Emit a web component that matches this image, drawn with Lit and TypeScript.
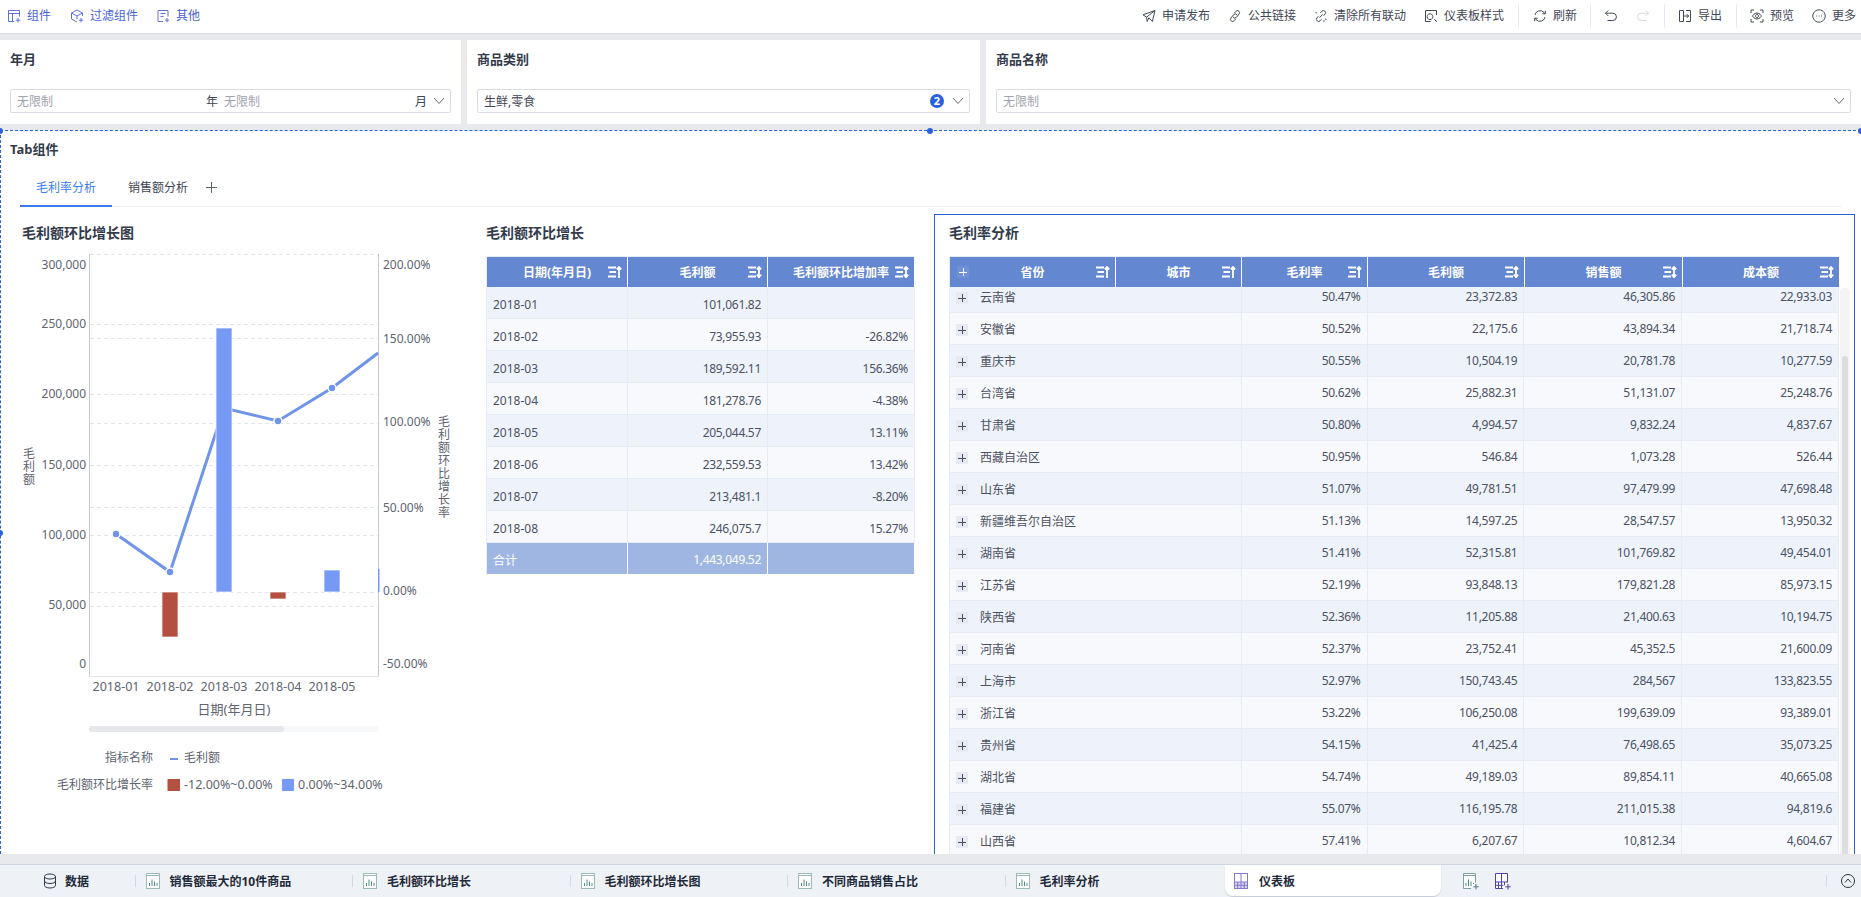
import { LitElement, html, svg, css } from 'lit';
import { customElement } from 'lit/decorators.js';

const toolIcons: Record<string, string> = {
  widget: 'M7 12.5H1.5v-11h11v6M1.5 4.5h11M5.5 4.5v8M11 9v4.5M8.8 11.2h4.4',
  filter: 'M12.5 7V4L7 1 1.5 4v6L7 13M1.5 4L7 7l5.5-3M7 7v3M11 9v4.4M8.8 11.2h4.4',
  other: 'M7 12.5H2v-11h10v6M4.5 4.5h5M4.5 7.5h3M11 9v4.5M8.8 11.2h4.4',
  send: 'M1 5.8L13 1.5l-2.6 11-3.6-3.7M1 5.8l3.6 2.4L13 1.5M4.6 8.2l.6 4.3 1.6-3.7',
  link: 'M6.2 4.2l1.6-1.9a2.1 2.1 0 0 1 3.2 2.8L8.2 8.5a2.1 2.1 0 0 1-3.2-.6M7.8 9.8l-1.6 1.9A2.1 2.1 0 0 1 3 8.9l2.8-3.4a2.1 2.1 0 0 1 3.2.6',
  unlink: 'M6.4 3.8l1.4-1.5a2.1 2.1 0 0 1 3.2 2.8L9.6 6.8M7.6 10.2l-1.4 1.5A2.1 2.1 0 0 1 3 8.9l1.4-1.7M5.6 8.6l3-3.2M1.5 3.5l1.6.7M12.5 10.5l-1.6-.7M10 12.8v-1.6',
  style: 'M12.5 6V1.5h-11v11h5M10.4 10.2l2.4 2.8M6 4.8a2.9 2.9 0 1 0 .01 0',
  refresh: 'M2 6a5.2 5.2 0 0 1 9-2.6l1 1.3M12.3 1.8v3h-3M12 8a5.2 5.2 0 0 1-9 2.6l-1-1.3M1.7 12.2v-3h3',
  undo: 'M4.2 1.5L1.5 4.2l2.7 2.7M1.5 4.2h7.3a3.6 3.6 0 0 1 0 7.3H3.5',
  redo: 'M9.8 1.5l2.7 2.7-2.7 2.7M12.5 4.2H5.2a3.6 3.6 0 0 0 0 7.3h5.3',
  exportIt: 'M5.5 1.5h-4v11h4zM8 1.5h4.5v11H8M5.5 7h5M8.7 5l2 2-2 2',
  preview: 'M1 4V1h3M10 1h3v3M13 10v3h-3M4 13H1v-3M2.5 7S4.2 4 7 4s4.5 3 4.5 3-1.7 3-4.5 3-4.5-3-4.5-3zM7 5.5a1.5 1.5 0 1 0 .01 0',
  more: 'M7 .8a6.2 6.2 0 1 0 .01 0M4.3 7h.8M6.7 7h.8M9.1 7h.8',
};

const middleRows = [
  ['2018-01', '101,061.82', ''],
  ['2018-02', '73,955.93', '-26.82%'],
  ['2018-03', '189,592.11', '156.36%'],
  ['2018-04', '181,278.76', '-4.38%'],
  ['2018-05', '205,044.57', '13.11%'],
  ['2018-06', '232,559.53', '13.42%'],
  ['2018-07', '213,481.1', '-8.20%'],
  ['2018-08', '246,075.7', '15.27%'],
];

const provinceRows = [
  ['云南省', '50.47%', '23,372.83', '46,305.86', '22,933.03'],
  ['安徽省', '50.52%', '22,175.6', '43,894.34', '21,718.74'],
  ['重庆市', '50.55%', '10,504.19', '20,781.78', '10,277.59'],
  ['台湾省', '50.62%', '25,882.31', '51,131.07', '25,248.76'],
  ['甘肃省', '50.80%', '4,994.57', '9,832.24', '4,837.67'],
  ['西藏自治区', '50.95%', '546.84', '1,073.28', '526.44'],
  ['山东省', '51.07%', '49,781.51', '97,479.99', '47,698.48'],
  ['新疆维吾尔自治区', '51.13%', '14,597.25', '28,547.57', '13,950.32'],
  ['湖南省', '51.41%', '52,315.81', '101,769.82', '49,454.01'],
  ['江苏省', '52.19%', '93,848.13', '179,821.28', '85,973.15'],
  ['陕西省', '52.36%', '11,205.88', '21,400.63', '10,194.75'],
  ['河南省', '52.37%', '23,752.41', '45,352.5', '21,600.09'],
  ['上海市', '52.97%', '150,743.45', '284,567', '133,823.55'],
  ['浙江省', '53.22%', '106,250.08', '199,639.09', '93,389.01'],
  ['贵州省', '54.15%', '41,425.4', '76,498.65', '35,073.25'],
  ['湖北省', '54.74%', '49,189.03', '89,854.11', '40,665.08'],
  ['福建省', '55.07%', '116,195.78', '211,015.38', '94,819.6'],
  ['山西省', '57.41%', '6,207.67', '10,812.34', '4,604.67'],
];

const bottomTabs = ['销售额最大的10件商品', '毛利额环比增长', '毛利额环比增长图', '不同商品销售占比', '毛利率分析'];

@customElement('app-root')
export class AppRoot extends LitElement {
  static styles = css`
    :host {
      background: #e8e9ed;
      color: #3f4656;
      display: flex;
      flex-direction: column;
      font-family: "Noto Sans", "Noto Sans CJK SC", sans-serif;
      font-size: 12px;
      height: 897px;
      overflow: hidden;
      width: 1861px;
    }

    /* toolbar */
    .toolbar {
      align-items: center;
      background: #fff;
      border-bottom: 1px solid #dcdde2;
      box-sizing: border-box;
      display: flex;
      flex: none;
      height: 34px;
      justify-content: space-between;
      padding: 0 5px 2px 7px;
    }

    .tool-group {
      align-items: center;
      display: flex;
      gap: 18px;
    }

    .tool {
      align-items: center;
      display: flex;
      gap: 6px;
      line-height: 20px;
      white-space: nowrap;
    }

    .tool svg {
      fill: none;
      flex: none;
      height: 14px;
      stroke: #414a5a;
      stroke-width: 1;
      width: 14px;
    }

    .tool-group.primary .tool {
      color: #4a62d8;
    }

    .tool-group.primary .tool:first-child {
      margin-right: 1px;
    }

    .tool-group.primary .tool svg {
      stroke: #5f70da;
    }

    .tool.disabled svg {
      stroke: #d5d8dd;
    }

    .tool-sep {
      background: #e8eaee;
      height: 24px;
      margin: 0 -4px;
      width: 1px;
    }

    .tool-sep.narrow {
      margin-right: -5px;
    }

    .tool-sep.tight {
      margin: 0 -5px;
    }

    /* filters */
    .filters {
      display: grid;
      flex: none;
      gap: 6px;
      grid-template-columns: 461px 513px 875px;
      height: 84px;
      margin: 6px 0;
    }

    .filter {
      background: #fff;
      box-sizing: border-box;
      padding: 9px 10px 0;
    }

    .filter-title {
      color: #333b4b;
      font-size: 13px;
      font-weight: 700;
      line-height: 20px;
    }

    .input {
      align-items: center;
      border: 1px solid #d9dce6;
      border-radius: 2px;
      box-sizing: border-box;
      display: flex;
      height: 24px;
      margin-top: 20px;
      padding: 0 5px 0 6px;
    }

    .placeholder {
      color: #9fa3ac;
    }

    .grow {
      flex: 1;
    }

    .half {
      display: flex;
      flex: none;
      width: 201px;
    }

    .input .second {
      margin-left: 6px;
    }

    .chevron {
      fill: none;
      flex: none;
      height: 8px;
      margin-left: 6px;
      stroke: #6c7280;
      width: 12px;
    }

    .badge {
      background: #2a62dd;
      border-radius: 50%;
      color: #fff;
      font-size: 11px;
      font-weight: 700;
      height: 14px;
      line-height: 14px;
      margin-right: 2px;
      text-align: center;
      width: 14px;
    }

    /* canvas */
    .canvas {
      background: #fff;
      border-left: 1px dashed #2a62dd;
      border-top: 1px dashed #2a62dd;
      box-sizing: border-box;
      flex: none;
      height: 724px;
      padding-top: 1px;
      position: relative;
      width: 1861px;
    }

    .clip {
      height: 722px;
      overflow: hidden;
    }

    .handle {
      background: #2a62dd;
      border-radius: 50%;
      height: 6px;
      position: absolute;
      width: 6px;
    }

    .handle.tl {
      left: -4px;
      top: -3px;
    }

    .handle.tc {
      left: 926px;
      top: -3px;
    }

    .handle.tr {
      right: -3px;
      top: -3px;
    }

    .handle.ml {
      left: -4px;
      top: 399px;
    }

    .tab-title {
      color: #333b4b;
      font-size: 13px;
      font-weight: 700;
      line-height: 20px;
      margin-bottom: 1px;
      padding: 7px 0 0 9px;
    }

    .tabs {
      align-items: flex-start;
      border-bottom: 1px solid #ebedf0;
      box-sizing: border-box;
      display: flex;
      height: 47px;
      margin: 0 20px 7px 19px;
    }

    .tab {
      border-bottom: 2px solid transparent;
      box-sizing: border-box;
      height: 47px;
      line-height: 20px;
      padding: 18px 16px 0;
    }

    .tab.active {
      border-bottom-color: #3a7cf0;
      color: #3a7cf0;
    }

    .tab-add {
      background:
        linear-gradient(#5f6472, #5f6472) center / 11px 1px no-repeat,
        linear-gradient(#5f6472, #5f6472) center / 1px 11px no-repeat;
      height: 11px;
      margin: 22px 0 0 2px;
      width: 11px;
    }

    .panels {
      display: grid;
      grid-template-columns: 469px 464px 921px;
    }

    .panel-title {
      color: #333b4b;
      font-size: 14px;
      font-weight: 700;
      line-height: 20px;
    }

    .chart-panel {
      padding: 9px 0 0 21px;
    }

    .chart {
      display: block;
      margin-left: -21px;
    }

    .chart text {
      fill: #60656f;
      font-family: "Noto Sans", "Noto Sans CJK SC", sans-serif;
      font-size: 12px;
      dominant-baseline: central;
    }

    .chart text.end {
      text-anchor: end;
    }

    .chart text.mid {
      text-anchor: middle;
    }

    .chart text.large {
      font-size: 12.5px;
    }

    .chart text.axis-name {
      font-size: 13px;
    }

    .chart text.vert {
      letter-spacing: 1px;
      text-anchor: middle;
      writing-mode: vertical-rl;
    }

    .middle-panel {
      padding: 9px 0 0 16px;
    }

    .ratio-panel {
      border: 1px solid #2a62dd;
      box-sizing: border-box;
      height: 720px;
      padding: 8px 0 0 14px;
    }

    /* tables */
    table {
      border-collapse: separate;
      border-spacing: 0;
      table-layout: fixed;
    }

    th,
    td {
      box-sizing: border-box;
      font-weight: 400;
      padding: 0 6px;
      white-space: nowrap;
    }

    .head-table {
      border-left: 1px solid #e6ebf4;
      border-top: 1px solid #e6ebf4;
      margin-top: 13px;
    }

    th {
      background: #6487d1;
      border-right: 1px solid #fff;
      color: #fff;
      font-weight: 700;
      height: 30px;
      position: relative;
      text-align: center;
    }

    .sort {
      fill: none;
      height: 12px;
      position: absolute;
      right: 5px;
      stroke: #fff;
      stroke-width: 1.8;
      top: 9px;
      width: 15px;
    }

    .expand {
      background:
        linear-gradient(#4a5062, #4a5062) center / 8px 1px no-repeat,
        linear-gradient(#4a5062, #4a5062) center / 1px 8px no-repeat,
        #e7eaf3;
      display: inline-block;
      height: 12px;
      margin-right: 12px;
      vertical-align: middle;
      width: 12px;
    }

    th .expand {
      background:
        linear-gradient(#fff, #fff) center / 8px 1px no-repeat,
        linear-gradient(#fff, #fff) center / 1px 8px no-repeat,
        #6f90d6;
      left: 7px;
      margin: 0;
      position: absolute;
      top: 9px;
    }

    td {
      border-bottom: 1px solid #e6ebf4;
      border-right: 1px solid #e6ebf4;
      color: #4b5162;
      height: 32px;
      letter-spacing: -0.3px;
      padding-top: 4px;
      text-align: right;
    }

    td.left {
      letter-spacing: 0;
      text-align: left;
    }

    tbody tr:nth-child(odd) td {
      background: #eef3fb;
    }

    tbody tr:nth-child(even) td {
      background: #f8f9fd;
    }

    tr.total td {
      background: #a0b6e2 !important;
      border-color: #fff;
      color: #fff;
      padding-top: 2px;
    }

    .body-table {
      border-left: 1px solid #e6ebf4;
    }

    .scroll-row {
      display: flex;
    }

    .scroll-body {
      height: 600px;
      overflow: hidden;
      width: 890px;
    }

    .scroll-body table {
      margin-top: -6px;
    }

    .scroll-body td {
      padding-top: 0;
    }

    .scrollbar {
      background: #f4f4f5;
      border-radius: 4px 4px 0 0;
      box-sizing: border-box;
      flex: none;
      height: 600px;
      margin-left: 1px;
      margin-top: 1px;
      padding: 68px 2px 0;
      width: 10px;
    }

    .scrollbar div {
      background: #dcdde0;
      border-radius: 3px 3px 0 0;
      height: 100%;
    }

    /* bottom bar */
    .bottom {
      align-items: center;
      background: #eef1f6;
      border-top: 1px solid #cfd6e0;
      box-sizing: border-box;
      display: flex;
      flex: none;
      height: 33px;
      margin-top: 10px;
      width: 1861px;
    }

    .data-tab {
      align-items: center;
      color: #1f2a3a;
      display: flex;
      flex: none;
      font-weight: 700;
      gap: 8px;
      padding-left: 43px;
      width: 91.5px;
    }

    .bottom-sep {
      background: #d5d9e0;
      flex: none;
      height: 12px;
      width: 1px;
    }

    .sheet {
      align-items: center;
      color: #1f2a3a;
      display: flex;
      flex: none;
      font-weight: 700;
      gap: 10px;
      padding-left: 10px;
      width: 206.5px;
    }

    .sheet svg,
    .icon-btn svg,
    .data-tab svg {
      fill: none;
      flex: none;
      height: 16px;
      width: 14px;
    }

    .icon-btn svg {
      height: 17px;
      width: 16px;
    }

    .sheet.active {
      background: #fff;
      border-radius: 0 0 8px 8px;
      box-shadow: 0 1px 1px #c4cad4;
      gap: 11px;
      height: 31px;
      margin: -1px 0 0 3px;
      padding-left: 9px;
      width: 207px;
    }

    .icon-btn {
      display: flex;
      flex: none;
      margin-left: 16px;
    }

    .icon-btn.first {
      margin-left: 22px;
    }

    .bottom-end {
      align-items: center;
      display: flex;
      gap: 14px;
      margin-left: auto;
      padding-right: 6px;
    }

    .bottom-end svg {
      fill: none;
      height: 16px;
      stroke: #2f3948;
      width: 14px;
    }
  `;

  toolIcon(name: string) {
    return html`<svg viewBox="0 0 14 14"><path d=${toolIcons[name]}></path></svg>`;
  }

  tool(name: string, label: string, disabled = false) {
    return html`<span class="tool ${disabled ? 'disabled' : ''}">${this.toolIcon(name)}${label}</span>`;
  }

  chevron() {
    return html`<svg class="chevron" viewBox="0 0 12 8"><path d="M1 1l5 5.5L11 1"></path></svg>`;
  }

  sortIcon(both: boolean) {
    return html`<svg class="sort" viewBox="0 0 15 12">
      <path d="M1 1.5h8M2.5 6h6.5M1 10.5h8M12 12V1M9.8 3.4L12 1l2.2 2.4"></path>
      ${both ? svg`<path d="M9.8 8.6L12 11l2.2-2.4"></path>` : ''}
    </svg>`;
  }

  sheetIcon() {
    return svg`<svg viewBox="0 0 14 16">
      <rect x=".5" y=".5" width="13" height="15" fill="#fff" stroke="#9dbab6"></rect>
      <path d="M1 2.5h12" stroke="#9dbab6"></path>
      <path d="M3.5 13V10M6 13V6.5M8.5 13V8.5M11 13V10" stroke="#4d8a86"></path>
    </svg>`;
  }

  dashboardIcon() {
    return svg`<svg viewBox="0 0 14 16">
      <rect x=".5" y=".5" width="13" height="15" fill="#fff" stroke="#8478cf"></rect>
      <rect x="1" y="9" width="12" height="6" fill="#d9d5f0"></rect>
      <path d="M.5 9h13M7 .5V15.5M.5 12.3h13M3.7 9v6.5M10.3 9v6.5" stroke="#8478cf"></path>
    </svg>`;
  }

  addSheetIcon() {
    return svg`<svg viewBox="0 0 16 17">
      <path d="M8 15.5H.5V.5h12v9" fill="#fff" stroke="#7fa09c"></path>
      <path d="M.5 2.5h12" stroke="#7fa09c"></path>
      <path d="M3 13V10M5.5 13V6.5M8 13V8.5M10.5 11V10" stroke="#4d8a86"></path>
      <path d="M13 11v5.5M10.3 13.800h5.500" stroke="#4d7f80"></path>
    </svg>`;
  }

  addDashboardIcon() {
    return svg`<svg viewBox="0 0 16 17">
      <path d="M8 15.5H.5V.5h12v9" fill="#fff" stroke="#4f44a8"></path>
      <path d="M.5 9h12M6.5 .5V15.5M.5 12.3h8M3.5 9v6.5M9.5 9v3.3" stroke="#4f44a8"></path>
      <path d="M13 11v5.5M10.3 13.800h5.500" stroke="#4f44a8"></path>
    </svg>`;
  }

  chart() {
    const grid = [254, 324, 338, 394, 423, 465, 507, 535, 592, 606];
    const leftLabels: [string, number][] = [
      ['300,000', 264], ['250,000', 323], ['200,000', 393], ['150,000', 464],
      ['100,000', 534], ['50,000', 604], ['0', 663],
    ];
    const rightLabels: [string, number][] = [
      ['200.00%', 264], ['150.00%', 338], ['100.00%', 421], ['50.00%', 507],
      ['0.00%', 590], ['-50.00%', 663],
    ];
    const months: [string, number][] = [
      ['2018-01', 116], ['2018-02', 170], ['2018-03', 224], ['2018-04', 278], ['2018-05', 332],
    ];
    const points: [number, number][] = [[116, 534], [170, 572], [278, 421], [332, 388]];
    const bars = [
      { x: 162, y: 592, h: 45, fill: '#b3503f' },
      { x: 216, y: 328, h: 264, fill: '#7599f5' },
      { x: 270, y: 592, h: 7, fill: '#b3503f' },
      { x: 324, y: 570, h: 22, fill: '#7599f5' },
    ];
    return html`<svg class="chart" width="469" height="570" viewBox="1 243 469 570">
      ${grid.map(y => svg`<line x1="90" x2="378" y1=${y + 0.5} y2=${y + 0.5} stroke="#e4e5e9" stroke-dasharray="4 3"></line>`)}
      <path d="M89.5 254v422.5M378.5 254v422.5" stroke="#c6c8cd" fill="none"></path>
      <path d="M89.5 676.5h289" stroke="#e2e4e8" fill="none"></path>
      <polyline points="116,534 170,572 224,408 278,421 332,388 378,353" fill="none" stroke="#7094ea" stroke-width="3"></polyline>
      ${bars.map(b => svg`<rect x=${b.x} y=${b.y} width="16" height=${b.h} fill=${b.fill} stroke="#fff" stroke-opacity=".7"></rect>`)}
      <rect x="378" y="569" width="1.5" height="23" fill="#7599f5"></rect>
      ${points.map(p => svg`<circle cx=${p[0]} cy=${p[1]} r="4" fill="#7094ea" stroke="#fff" stroke-width="1.5"></circle>`)}
      ${leftLabels.map(l => svg`<text class="end" x="86" y=${l[1]}>${l[0]}</text>`)}
      ${rightLabels.map(l => svg`<text x="383" y=${l[1]}>${l[0]}</text>`)}
      ${months.map(m => svg`<text class="mid large" x=${m[1]} y="686">${m[0]}</text>`)}
      <text class="mid axis-name" x="234" y="709">日期(年月日)</text>
      <text class="vert" x="28" y="467">毛利额</text>
      <text class="vert" x="443" y="467">毛利额环比增长率</text>
      <rect x="89" y="726" width="290" height="6" rx="3" fill="#f7f8f9"></rect>
      <rect x="89" y="726" width="195" height="6" rx="3" fill="#e6e7ea"></rect>
      <text class="end" x="153" y="757">指标名称</text>
      <rect x="170" y="758" width="8" height="2" fill="#7094ea"></rect>
      <text x="184" y="757">毛利额</text>
      <text class="end" x="153" y="784">毛利额环比增长率</text>
      <rect x="167.5" y="779" width="12.5" height="12" fill="#b3503f"></rect>
      <text class="large" x="184" y="784">-12.00%~0.00%</text>
      <rect x="282" y="779" width="12" height="12" fill="#7599f5"></rect>
      <text class="large" x="298" y="784">0.00%~34.00%</text>
    </svg>`;
  }

  middleTable() {
    return html`<table class="head-table">
      <colgroup><col width="141" /><col width="140" /><col width="147" /></colgroup>
      <thead>
        <tr>
          <th>日期(年月日)${this.sortIcon(false)}</th>
          <th>毛利额${this.sortIcon(true)}</th>
          <th>毛利额环比增加率${this.sortIcon(true)}</th>
        </tr>
      </thead>
      <tbody>
        ${middleRows.map(
          r => html`<tr>
            <td class="left">${r[0]}</td>
            <td>${r[1]}</td>
            <td>${r[2]}</td>
          </tr>`
        )}
        <tr class="total">
          <td class="left">合计</td>
          <td>1,443,049.52</td>
          <td></td>
        </tr>
      </tbody>
    </table>`;
  }

  ratioCols() {
    return html`<colgroup>
      <col width="166" /><col width="126" /><col width="126" />
      <col width="157" /><col width="158" /><col width="157" />
    </colgroup>`;
  }

  ratioTable() {
    return html`<table class="head-table">
        ${this.ratioCols()}
        <thead>
          <tr>
            <th><span class="expand"></span>省份${this.sortIcon(false)}</th>
            <th>城市${this.sortIcon(false)}</th>
            <th>毛利率${this.sortIcon(false)}</th>
            <th>毛利额${this.sortIcon(true)}</th>
            <th>销售额${this.sortIcon(true)}</th>
            <th>成本额${this.sortIcon(true)}</th>
          </tr>
        </thead>
      </table>
      <div class="scroll-row">
        <div class="scroll-body">
          <table class="body-table">
            ${this.ratioCols()}
            <tbody>
              ${provinceRows.map(
                r => html`<tr>
                  <td class="left" colspan="2"><span class="expand"></span>${r[0]}</td>
                  <td>${r[1]}</td>
                  <td>${r[2]}</td>
                  <td>${r[3]}</td>
                  <td>${r[4]}</td>
                </tr>`
              )}
            </tbody>
          </table>
        </div>
        <div class="scrollbar"><div></div></div>
      </div>`;
  }

  render() {
    return html`
      <header class="toolbar">
        <div class="tool-group primary">
          ${this.tool('widget', '组件')}
          ${this.tool('filter', '过滤组件')}
          ${this.tool('other', '其他')}
        </div>
        <div class="tool-group">
          ${this.tool('send', '申请发布')}
          ${this.tool('link', '公共链接')}
          ${this.tool('unlink', '清除所有联动')}
          ${this.tool('style', '仪表板样式')}
          <span class="tool-sep"></span>
          ${this.tool('refresh', '刷新')}
          <span class="tool-sep tight"></span>
          ${this.tool('undo', '')}
          ${this.tool('redo', '', true)}
          <span class="tool-sep narrow"></span>
          ${this.tool('exportIt', '导出')}
          <span class="tool-sep narrow"></span>
          ${this.tool('preview', '预览')}
          ${this.tool('more', '更多')}
        </div>
      </header>

      <section class="filters">
        <div class="filter">
          <div class="filter-title">年月</div>
          <div class="input">
            <span class="half"><span class="placeholder grow">无限制</span>年</span>
            <span class="placeholder second grow">无限制</span>
            <span>月</span>
            ${this.chevron()}
          </div>
        </div>
        <div class="filter">
          <div class="filter-title">商品类别</div>
          <div class="input">
            <span class="grow">生鲜,零食</span>
            <span class="badge">2</span>
            ${this.chevron()}
          </div>
        </div>
        <div class="filter">
          <div class="filter-title">商品名称</div>
          <div class="input">
            <span class="placeholder grow">无限制</span>
            ${this.chevron()}
          </div>
        </div>
      </section>

      <main class="canvas">
        <i class="handle tl"></i>
        <i class="handle tc"></i>
        <i class="handle tr"></i>
        <i class="handle ml"></i>
        <div class="clip">
          <div class="tab-title">Tab组件</div>
          <div class="tabs">
            <span class="tab active">毛利率分析</span>
            <span class="tab">销售额分析</span>
            <span class="tab-add"></span>
          </div>
          <div class="panels">
            <div class="chart-panel">
              <div class="panel-title">毛利额环比增长图</div>
              ${this.chart()}
            </div>
            <div class="middle-panel">
              <div class="panel-title">毛利额环比增长</div>
              ${this.middleTable()}
            </div>
            <div class="ratio-panel">
              <div class="panel-title">毛利率分析</div>
              ${this.ratioTable()}
            </div>
          </div>
        </div>
      </main>

      <footer class="bottom">
        <div class="data-tab">
          <svg viewBox="0 0 14 16" stroke="#2f3948">
            <ellipse cx="7" cy="3.5" rx="5.5" ry="2.5"></ellipse>
            <path d="M1.5 3.5v9c0 1.4 2.5 2.5 5.5 2.5s5.5-1.1 5.5-2.5v-9M1.5 8c0 1.4 2.5 2.5 5.5 2.5s5.5-1.1 5.5-2.5"></path>
          </svg>
          数据
        </div>
        ${bottomTabs.map(
          t => html`<span class="bottom-sep"></span>
            <div class="sheet">${this.sheetIcon()}${t}</div>`
        )}
        <div class="sheet active">${this.dashboardIcon()}仪表板</div>
        <span class="icon-btn first">${this.addSheetIcon()}</span>
        <span class="icon-btn">${this.addDashboardIcon()}</span>
        <div class="bottom-end">
          <span class="bottom-sep"></span>
          <svg viewBox="0 0 14 16">
            <circle cx="7" cy="8" r="6.5"></circle>
            <path d="M4 9.5L7 6l3 3.5"></path>
          </svg>
        </div>
      </footer>
    `;
  }
}
